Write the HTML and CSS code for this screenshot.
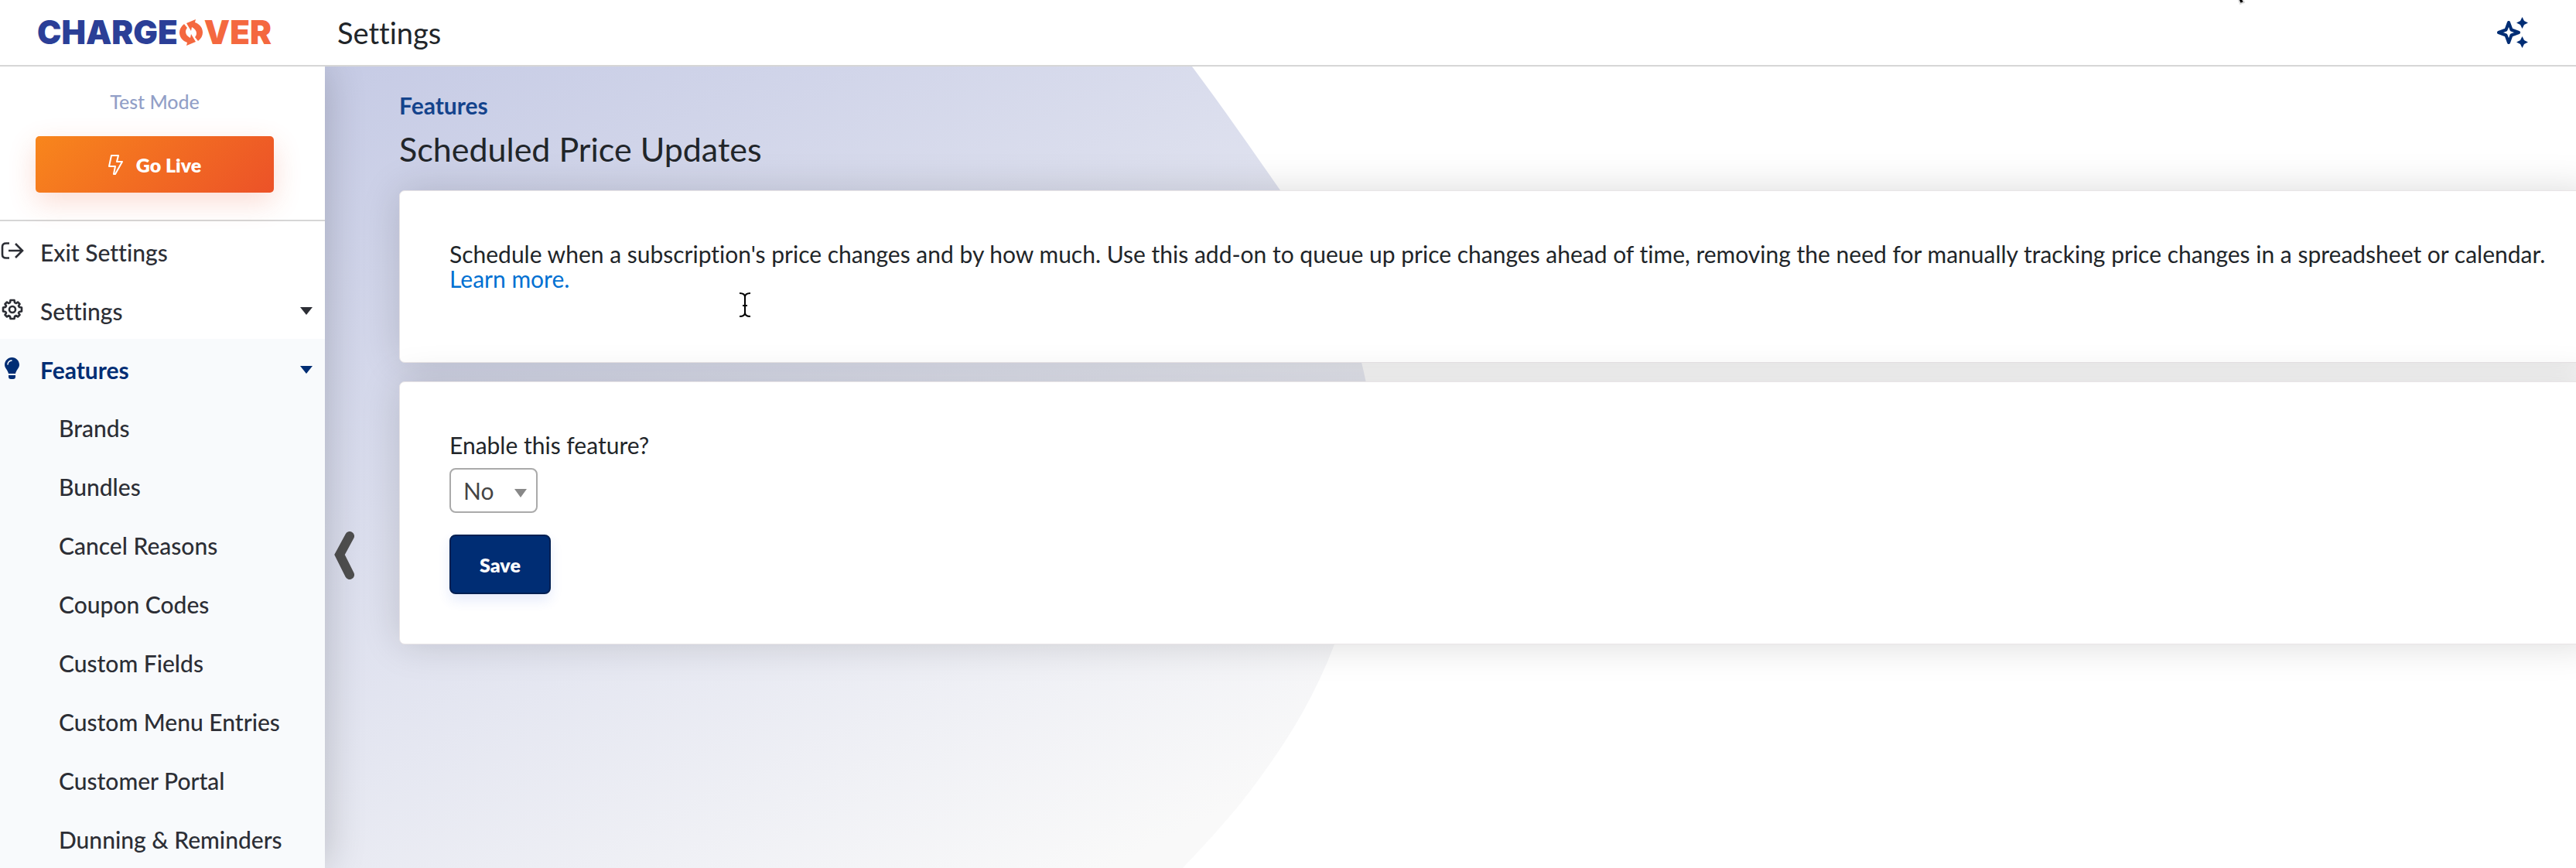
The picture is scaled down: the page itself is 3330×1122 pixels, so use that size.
FILE: index.html
```html
<!DOCTYPE html>
<html lang="en">
<head>
  <meta charset="UTF-8">
  <title>Scheduled Price Updates</title>
  <link rel="stylesheet" href="styles.css">
</head>
<body>
  <header class="topbar">
    <a class="logo" href="#">
      <span class="logo-blue">CHARGE</span>
      <svg class="logo-o" viewBox="0 0 30 34" width="30" height="34">
        <path fill="#f4683f" d="M6 6 C2 9 0 13 0 17 C0 23 4 28 10 30 L9 34 L21 29 L15 19 L14 24 C10 22 8 19 8 16 C8 14 9 12 10 11 Z"/>
        <path fill="#f4683f" d="M24 28 C28 25 30 21 30 17 C30 11 26 6 20 4 L21 0 L9 5 L15 15 L16 10 C20 12 22 15 22 18 C22 20 21 22 20 23 Z"/>
      </svg>
      <span class="logo-orange">VER</span>
    </a>
    <h1 class="topbar-title">Settings</h1>
    <svg class="pointer" viewBox="0 0 18 8" width="18" height="8">
      <path fill="#000" stroke="#ddd" stroke-width="2" d="M9 -2 L12 5 L17 3 L14 -3 Z"/>
    </svg>
    <button class="ai-btn" type="button" aria-label="Assistant">
      <svg viewBox="0 0 40 40" width="40" height="40">
        <path fill="none" stroke="#002d74" stroke-width="4" stroke-linejoin="round" d="M15 7 L18.500 16.500 L28 20 L18.500 23.500 L15 33 L11.500 23.500 L2 20 L11.500 16.500 Z"/>
        <path fill="#002d74" d="M32.500 0 L35 5 L40 7.500 L35 10 L32.500 15 L30 10 L25 7.500 L30 5 Z M32.500 25 L35 30 L40 32.500 L35 35 L32.500 40 L30 35 L25 32.500 L30 30 Z"/>
      </svg>
    </button>
  </header>

  <div class="layout">
    <aside class="sidebar">
      <div class="live-box">
        <p class="test-mode">Test Mode</p>
        <button class="btn-live" type="button">
          <svg viewBox="0 0 20 26" width="20" height="26">
            <path fill="none" stroke="#fff" stroke-width="2" stroke-linejoin="round" d="M4 1 H13 L11 9 H18 L9 25 H7 L9 15 H1 Z"/>
          </svg>
          Go Live
        </button>
      </div>

      <nav class="menu">
        <a class="menu-item" href="#">
          <svg class="menu-icon" viewBox="0 0 32 32" width="32" height="32">
            <path fill="none" stroke="#2c2e35" stroke-width="2.600" d="M12 6.500 H8 Q3 6.500 3 11 V21 Q3 25.500 8 25.500 H12 M11 16 H28 M20 7 L29 16 L20 25"/>
          </svg>
          Exit Settings
        </a>
        <a class="menu-item" href="#">
          <svg class="menu-icon" viewBox="0 0 32 32" width="32" height="32">
            <g fill="none" stroke="#2c2e35" stroke-width="2.600" stroke-linejoin="round">
              <path d="M13 7 L13.500 4 H18.500 L19 7 L21 8 L23 6.500 L25.500 9 L24 11.500 L25 13 L28 13.500 V18.500 L25 19 L24 20.500 L25.500 23 L23 25.500 L21 24 L19 25 L18.500 28 H13.500 L13 25 L11 24 L9 25.500 L6.500 23 L8 20.500 L7 19 L4 18.500 V13.500 L7 13 L8 11.500 L6.500 9 L9 6.500 L11 8 Z"/>
              <circle cx="16" cy="16" r="4"/>
            </g>
          </svg>
          Settings
          <span class="caret"></span>
        </a>
        <div class="menu-open">
          <a class="menu-item active" href="#">
            <svg class="menu-icon" viewBox="0 0 32 32" width="32" height="32">
              <path fill="#002d74" d="M15.500 2 C10 2 6 6.500 6 11.500 C6 16 10 18 11 23 H20 C21 18 25 16 25 11.500 C25 6.500 21 2 15.500 2 Z M11 25 H20 V27 Q20 30 17 30 H14 Q11 30 11 27 Z"/>
              <path fill="none" stroke="#fff" stroke-width="1.500" stroke-linecap="round" d="M10 11 Q10.500 6.500 15 6"/>
            </svg>
            Features
            <span class="caret"></span>
          </a>
          <a class="menu-item sub" href="#">Brands</a>
          <a class="menu-item sub" href="#">Bundles</a>
          <a class="menu-item sub" href="#">Cancel Reasons</a>
          <a class="menu-item sub" href="#">Coupon Codes</a>
          <a class="menu-item sub" href="#">Custom Fields</a>
          <a class="menu-item sub" href="#">Custom Menu Entries</a>
          <a class="menu-item sub" href="#">Customer Portal</a>
          <a class="menu-item sub" href="#">Dunning &amp; Reminders</a>
        </div>
      </nav>
    </aside>

    <main class="content">
      <svg class="bg-shape" viewBox="0 0 1380 1036" width="1380" height="1036">
        <defs>
          <linearGradient id="bg-fade" gradientUnits="userSpaceOnUse" x1="0" y1="0" x2="617" y2="1234">
            <stop offset="0" stop-color="#c6cbe5"/>
            <stop offset="1" stop-color="#f9f9f9"/>
          </linearGradient>
        </defs>
        <path fill="url(#bg-fade)" d="M0 0 H1121 C1160 52 1198 107 1235 160 C1290 238 1326 317 1343 395 C1353 440 1360 485 1360 530 C1360 602 1332 675 1305 747 C1282 808 1249 865 1209 919 C1180 960 1145 998 1109 1036 H0 Z"/>
      </svg>
      <button class="collapse" type="button" aria-label="Collapse menu">
        <svg viewBox="0 0 26 62" width="26" height="62">
          <path fill="none" stroke="#4f4f4f" stroke-width="12" stroke-linecap="round" d="M20 6 L7 30 L20 56"/>
        </svg>
      </button>

      <a class="crumb" href="#">Features</a>
      <h2 class="page-title">Scheduled Price Updates</h2>

      <section class="card card-intro">
        <p>Schedule when a subscription's price changes and by how much. Use this add-on to queue up price changes ahead of time, removing the need for manually tracking price changes in a spreadsheet or calendar.<br>
        <a href="#">Learn more.</a></p>
      </section>

      <form class="card">
        <label for="enable">Enable this feature?</label>
        <div class="select-wrap">
          <select id="enable">
            <option>No</option>
            <option>Yes</option>
          </select>
        </div>
        <button class="btn-save" type="button">Save</button>
      </form>

      <svg class="text-cursor" viewBox="0 0 14 32" width="14" height="32">
        <path fill="none" stroke="#000" stroke-width="2" d="M0 1 Q7 1 7 6 Q7 1 14 1 M7 5 V27 M4 17 H10 M0 31 Q7 31 7 26 Q7 31 14 31"/>
      </svg>
    </main>
  </div>
</body>
</html>
```
FILE: styles.css
```css
* {
  box-sizing: border-box;
}
body {
  margin: 0;
  min-height: 100vh;
  display: flex;
  flex-direction: column;
  background: #fff;
  color: #212529;
  font-family: Lato, sans-serif;
  font-size: 30px;
  line-height: 32px;
  font-variant-ligatures: none;
}
h1, h2, p {
  margin: 0;
  font-weight: 400;
}
a {
  color: #0070d2;
  text-decoration: none;
}
button {
  border: none;
  background: none;
  padding: 0;
  font-family: inherit;
  cursor: pointer;
}
.topbar {
  position: relative;
  z-index: 2;
  display: flex;
  align-items: center;
  height: 86px;
  background: #fff;
  border-bottom: 2px solid #d6d6d6;
}
.logo {
  display: flex;
  align-items: center;
  width: 436px;
  padding-left: 48px;
  gap: 2px;
  font-family: Inter, sans-serif;
  font-size: 42px;
  font-weight: 900;
}
.logo-blue {
  color: #2b3f97;
}
.logo-orange {
  color: #f4683f;
}
.topbar-title {
  font-size: 38px;
}
.pointer {
  position: absolute;
  top: 0;
  right: 428px;
}
.ai-btn {
  display: flex;
  margin-left: auto;
  margin-right: 62px;
}
.layout {
  display: flex;
  flex: 1;
}
.sidebar {
  position: relative;
  z-index: 1;
  width: 420px;
  background: #fff;
  box-shadow: 0 0 50px rgba(0, 0, 0, 0.2);
}
.live-box {
  height: 200px;
  padding: 29px 66px 0 46px;
  border-bottom: 2px solid #d6d6d6;
  text-align: center;
}
.test-mode {
  color: #929fc7;
  font-size: 25px;
  font-weight: 500;
}
.btn-live {
  display: flex;
  align-items: center;
  justify-content: center;
  gap: 16px;
  width: 100%;
  height: 73px;
  margin-top: 29px;
  border-radius: 5px;
  background: linear-gradient(135deg, #f8861c, #ec5228);
  box-shadow: 0 12px 36px rgba(236, 82, 40, 0.2);
  color: #fff;
  font-size: 25px;
  font-weight: 800;
}
.menu-item {
  display: flex;
  align-items: center;
  height: 76px;
  padding-top: 4px;
  padding-right: 16px;
  color: #2c2e35;
  font-weight: 500;
}
.menu-icon {
  margin-right: 20px;
  margin-bottom: 4px;
}
.menu-item.sub {
  padding-top: 2px;
  padding-left: 76px;
}
.menu-item.active {
  color: #002d74;
  font-weight: 700;
}
.menu-open {
  background: #f8fafc;
}
.caret {
  margin-left: auto;
  border: 8px solid transparent;
  border-top: 10px solid;
  border-bottom: 0;
}
.content {
  position: relative;
  z-index: 0;
  flex: 1;
  overflow: hidden;
  padding: 34px 0 0 96px;
}
.bg-shape {
  position: absolute;
  top: 0;
  left: 0;
  z-index: -1;
}
.collapse {
  position: absolute;
  top: 601px;
  left: 12px;
}
.text-cursor {
  position: absolute;
  top: 292px;
  left: 536px;
}
.crumb {
  color: #14438c;
  font-weight: 700;
}
.page-title {
  margin: 17px 0 29px;
  font-size: 43px;
  line-height: 48px;
}
.card {
  margin-right: -24px;
  margin-bottom: 24px;
  padding: 65px 0 64px 64px;
  border: 1px solid #e8e4e6;
  border-radius: 7px;
  background: #fff;
  box-shadow: 0 0 50px rgba(0, 0, 0, 0.15);
}
.card-intro {
  padding-bottom: 92px;
}
.select-wrap {
  position: relative;
  width: 114px;
  margin: 14px 0 28px;
}
.select-wrap::after {
  content: "";
  position: absolute;
  top: 27px;
  right: 14px;
  border: 8px solid transparent;
  border-top: 11px solid #888;
  border-bottom: 0;
  pointer-events: none;
}
select {
  appearance: none;
  width: 100%;
  height: 58px;
  padding: 0 16px;
  border: 2px solid #aaa;
  border-radius: 8px;
  background: #fff;
  color: #444;
  font-family: inherit;
  font-size: 30px;
}
.btn-save {
  width: 131px;
  height: 77px;
  border: 2px solid #001f52;
  border-radius: 8px;
  background: #002d74;
  box-shadow: 0 8px 16px rgba(50, 90, 220, 0.12);
  color: #fff;
  font-size: 25px;
  font-weight: 800;
}
```
